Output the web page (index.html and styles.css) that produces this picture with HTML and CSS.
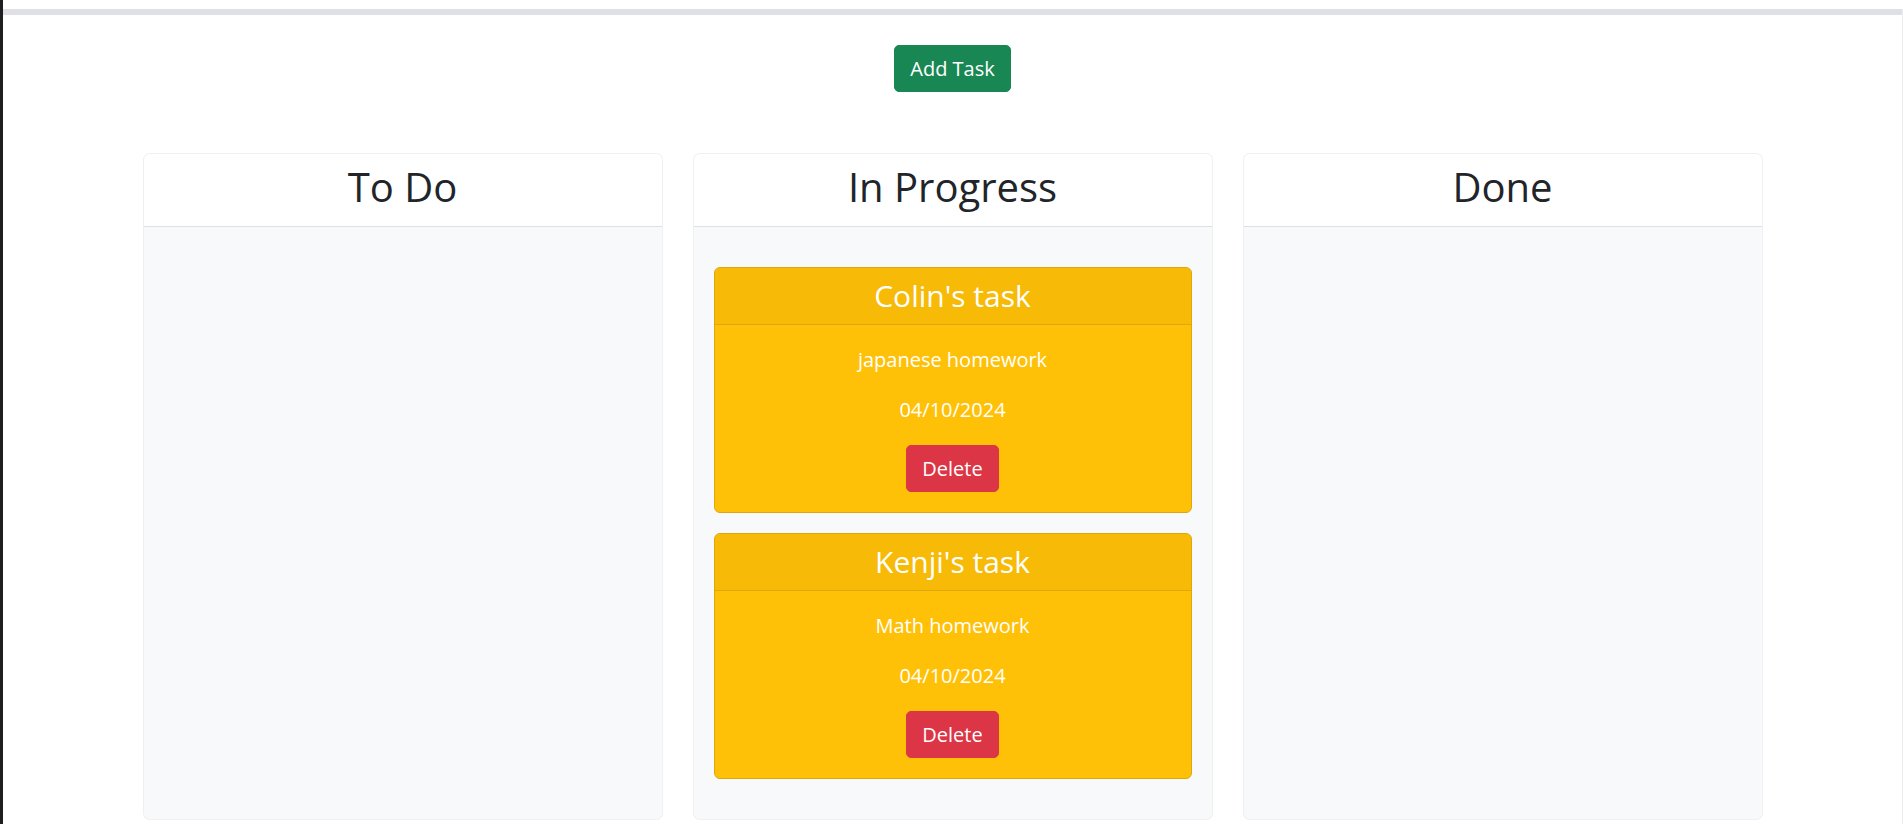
FILE: index.html
```html
<!DOCTYPE html>
<html lang="en">
<head>
<meta charset="utf-8">
<title>Task Board</title>
<link rel="stylesheet" href="styles.css">
</head>
<body>
<div class="page">
  <div class="topbar"></div>
  <div class="actions">
    <button class="btn btn-success" type="button">Add Task</button>
  </div>
  <main class="board">
    <section class="lane">
      <header class="lane-header"><h2>To Do</h2></header>
      <div class="lane-body"></div>
    </section>
    <section class="lane">
      <header class="lane-header"><h2>In Progress</h2></header>
      <div class="lane-body">
        <article class="task">
          <div class="task-header"><h4>Colin's task</h4></div>
          <div class="task-body">
            <p>japanese homework</p>
            <p>04/10/2024</p>
            <button class="btn btn-danger" type="button">Delete</button>
          </div>
        </article>
        <article class="task">
          <div class="task-header"><h4>Kenji's task</h4></div>
          <div class="task-body">
            <p>Math homework</p>
            <p>04/10/2024</p>
            <button class="btn btn-danger" type="button">Delete</button>
          </div>
        </article>
      </div>
    </section>
    <section class="lane">
      <header class="lane-header"><h2>Done</h2></header>
      <div class="lane-body"></div>
    </section>
  </main>
</div>
</body>
</html>
```

FILE: styles.css
```css
html, body {
  margin: 0;
  padding: 0;
  height: 100%;
}

body {
  background: #ffffff;
  font-family: "Open Sans", "Noto Sans", "Liberation Sans", sans-serif;
  font-size: 20px;
  line-height: 1.5;
  color: #212529;
  border-left: 3px solid #1f1f1f;
  box-sizing: border-box;
}

.page {
  min-height: 100%;
  border-right: 1px solid #ececee;
  box-sizing: border-box;
}

.topbar {
  height: 6px;
  margin-top: 9px;
  background: #dee0e5;
}

.actions {
  display: flex;
  justify-content: center;
  padding-top: 30px;
}

.btn {
  font-family: inherit;
  font-size: 20px;
  line-height: 30px;
  padding: 7.5px 15px;
  border: 1px solid transparent;
  border-radius: 5px;
  color: #ffffff;
  cursor: pointer;
}

.btn-success {
  background: #198754;
  border-color: #198754;
}

.btn-danger {
  background: #dc3545;
  border-color: #dc3545;
}

.board {
  width: 1650px;
  margin: 61px auto 0;
  padding: 0 15px;
  box-sizing: border-box;
  display: grid;
  grid-template-columns: repeat(3, 1fr);
  gap: 30px;
}

.lane {
  display: flex;
  flex-direction: column;
  border: 1px solid rgba(0, 0, 0, 0.035);
  border-radius: 7px;
  overflow: hidden;
  background: #f8f9fa;
}

.lane-header {
  background: #ffffff;
  padding: 9px 20px 15px;
  border-bottom: 1px solid #dee0e5;
  text-align: center;
}

.lane-header h2 {
  margin: 0;
  font-size: 40px;
  line-height: 48px;
  font-weight: 400;
  color: #212529;
}

.lane-body {
  flex: 1;
  padding: 0 20px;
  display: flex;
  flex-direction: column;
  gap: 20px;
  padding-top: 40px;
  padding-bottom: 40px;
}

.lane-body:empty {
  padding: 0;
}

.task {
  background: #ffc107;
  border: 1px solid #dea80a;
  border-radius: 6px;
  overflow: hidden;
  color: #ffffff;
  text-align: center;
}

.task-header {
  background: #f6ba07;
  padding: 10px 20px;
  border-bottom: 1px solid #dea80a;
}

.task-header h4 {
  margin: 0;
  font-size: 30px;
  line-height: 36px;
  font-weight: 400;
}

.task-body {
  padding: 20px;
}

.task-body p {
  margin: 0 0 20px;
  line-height: 30px;
}
```
